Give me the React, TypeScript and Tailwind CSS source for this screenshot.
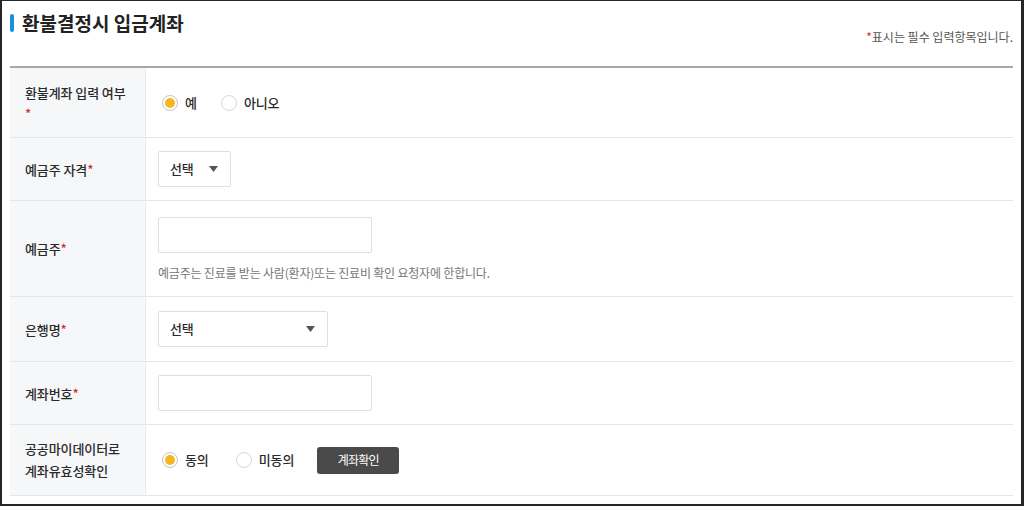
import React from 'react';

const font = { fontFamily: '"Noto Sans CJK KR", "Noto Sans", sans-serif' };

const Req = () => <span className="text-[#d3312c]">*</span>;

const Radio: React.FC<{ checked?: boolean; label: string; className?: string }> = ({
  checked,
  label,
  className = '',
}) => (
  <label className={`flex items-center ${className}`}>
    <span
      className={`flex h-4 w-4 items-center justify-center rounded-full border bg-white ${
        checked ? 'border-[#c4c4c4]' : 'border-[#d9d9d9]'
      }`}
    >
      {checked && <span className="h-[10px] w-[10px] rounded-full bg-[#f6b623]" />}
    </span>
    <span className="ml-[7px] text-[13px] font-medium tracking-[-0.1px] text-[#2a2a2a]">{label}</span>
  </label>
);

const Select: React.FC<{ width: string }> = ({ width }) => (
  <div
    className={`flex h-9 items-center justify-between rounded-[2px] border border-[#dedede] bg-white pl-[11px] pr-[12px] ${width}`}
  >
    <span className="text-[13px] font-medium tracking-[-0.1px] text-[#2a2a2a]">선택</span>
    <svg width="9" height="6" viewBox="0 0 9 6">
      <path d="M0 0 H9 L4.5 6 Z" fill="#555" />
    </svg>
  </div>
);

const Input = () => (
  <div className="h-9 w-[214px] rounded-[2px] border border-[#dedede] bg-white" />
);

const Row: React.FC<{ h: string; label: React.ReactNode; children: React.ReactNode }> = ({
  h,
  label,
  children,
}) => (
  <div className={`flex border-b border-[#e6e6e6] ${h}`}>
    <div className="flex w-[136px] shrink-0 flex-col justify-center border-r border-[#ececec] bg-[#f6f7f9] pl-[15px] text-[13px] font-medium leading-[21px] tracking-[-0.1px] text-[#2a2a2a]">
      {label}
    </div>
    <div className="flex flex-1 flex-col justify-center pl-3">{children}</div>
  </div>
);

const App: React.FC = () => {
  return (
    <div
      style={font}
      className="h-[506px] w-[1024px] overflow-hidden border-t border-b-2 border-l-2 border-r-[3px] border-[#262626] bg-white pl-2 pr-2"
    >
      <div className="flex items-center pt-[12px]">
        <span className="h-[18px] w-1 rounded-sm bg-[#1a8fdb]" />
        <h2 className="ml-2 text-[19px] font-bold leading-[20px] text-[#222]">
          환불결정시 입금계좌
        </h2>
      </div>
      <p className="-mt-[4px] text-right text-[12px] leading-[16px] text-[#555]">
        <Req />표시는 필수 입력항목입니다.
      </p>
      <div className="mt-[21px] border-t-2 border-[#a8a8a8]">
        <Row
          h="h-[70px]"
          label={
            <>
              <span>환불계좌 입력 여부</span>
              <Req />
            </>
          }
        >
          <div className="flex items-center pl-1">
            <Radio checked label="예" />
            <Radio label="아니오" className="ml-6" />
          </div>
        </Row>
        <Row
          h="h-[63px]"
          label={
            <span>
              예금주 자격<Req />
            </span>
          }
        >
          <Select width="w-[73px]" />
        </Row>
        <Row
          h="h-[96px]"
          label={
            <span>
              예금주<Req />
            </span>
          }
        >
          <Input />
          <p className="mt-3 text-[12px] leading-4 tracking-[-0.2px] text-[#777]">
            예금주는 진료를 받는 사람(환자)또는 진료비 확인 요청자에 한합니다.
          </p>
        </Row>
        <Row
          h="h-[65px]"
          label={
            <span>
              은행명<Req />
            </span>
          }
        >
          <Select width="w-[170px]" />
        </Row>
        <Row
          h="h-[63px]"
          label={
            <span>
              계좌번호<Req />
            </span>
          }
        >
          <Input />
        </Row>
        <Row
          h="h-[71px]"
          label={
            <>
              <span className="leading-[22px]">공공마이데이터로</span>
              <span className="leading-[22px]">계좌유효성확인</span>
            </>
          }
        >
          <div className="flex items-center pl-1">
            <Radio checked label="동의" />
            <Radio label="미동의" className="ml-[27px]" />
            <button className="ml-[23px] h-[27px] w-[82px] rounded-[3px] bg-[#4a4a4a] text-[12px] tracking-[-0.8px] text-white">
              계좌확인
            </button>
          </div>
        </Row>
      </div>
    </div>
  );
};

export default App;
